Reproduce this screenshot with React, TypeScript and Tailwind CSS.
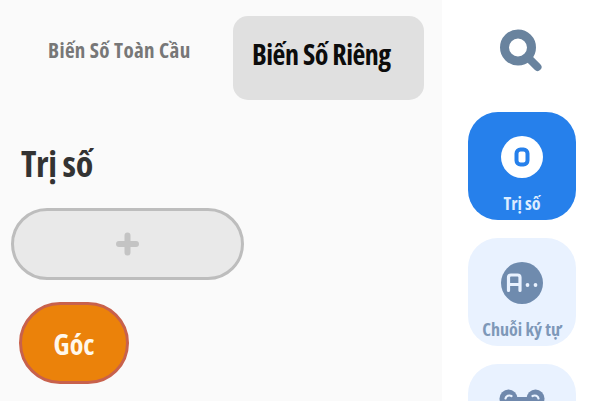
import type { ReactNode } from "react";

const CategoryButton = ({
  label,
  active = false,
  children,
}: {
  label: string;
  active?: boolean;
  children: ReactNode;
}) => (
  <button
    className={`flex h-[108px] w-[108px] shrink-0 flex-col items-center rounded-[30px] pt-6 ${
      active ? "bg-[#2680eb] text-[#dcecff]" : "bg-[#e9f2ff] text-[#7e98b8]"
    }`}
  >
    {children}
    <span className="mt-[13px] whitespace-nowrap text-[18px] leading-6 font-bold">
      {label}
    </span>
  </button>
);

const App = () => {
  return (
    <div className="flex h-[401px] w-[591px] overflow-hidden bg-white font-['Open_Sans','Noto_Sans',sans-serif] [font-stretch:75%]">
      {/* Variables panel */}
      <main className="w-[442px] shrink-0 bg-[#fafafa]">
        <div className="flex pt-4">
          <button className="h-[84px] w-[233px] pl-[48px] pb-[16px] text-left text-[21px] leading-7 font-bold tracking-[0.35px] whitespace-nowrap text-[#777]">
            Biến Số Toàn Cầu
          </button>
          <button className="h-[84px] w-[191px] rounded-[15px] bg-[#e0e0e0] pl-[19px] pb-[9px] text-left text-[28px] leading-8 font-bold tracking-[-0.5px] whitespace-nowrap text-[#0c0c0c]">
            Biến Số Riêng
          </button>
        </div>

        <h2 className="mt-[40px] ml-[21px] text-[36px] leading-[48px] font-bold tracking-[-0.4px] text-[#333]">
          Trị số
        </h2>

        <button className="mt-5 ml-[11px] flex h-[72px] w-[233px] items-center justify-center rounded-full border-[3px] border-[#bdbdbd] bg-[#e9e9e9]">
          <svg className="h-6 w-6" viewBox="0 0 24 24" fill="none" stroke="#c4c4c4" strokeWidth="6" strokeLinecap="round">
            <path d="M11.5 3.5v17M3 12h17" />
          </svg>
        </button>

        <button className="mt-[22px] ml-[19px] flex h-[82px] w-[110px] items-center justify-center rounded-full border-[3px] border-[#c8614c] bg-[#eb820a] pt-[2px] text-[28px] leading-9 font-bold text-[#fff8ec]">
          Góc
        </button>
      </main>

      {/* Category rail */}
      <aside className="flex flex-1 flex-col items-center gap-[18px] pr-[11px] pl-[22px]">
        <div className="flex h-[94px] shrink-0 items-center justify-center pt-[7px]">
          <svg className="h-[44px] w-[44px]" viewBox="0 0 44 44" fill="none" stroke="#69839e">
            <circle cx="18" cy="18.5" r="13.5" strokeWidth="9" />
            <path d="M28 28.5l9.5 9.5" strokeWidth="8" strokeLinecap="round" />
          </svg>
        </div>

        <CategoryButton label="Trị số" active>
          <svg className="h-[42px] w-[42px] shrink-0" viewBox="0 0 42 42">
            <circle cx="21" cy="21" r="21" fill="#fff" />
            <rect x="15.5" y="13.5" width="11" height="15" rx="4" fill="none" stroke="#2680eb" strokeWidth="4" />
          </svg>
        </CategoryButton>

        <CategoryButton label="Chuỗi ký tự">
          <svg className="h-[42px] w-[42px] shrink-0" viewBox="0 0 42 42">
            <circle cx="21" cy="21" r="21" fill="#6f8bae" />
            <path
              d="M7.5 28.5V15.5q0-2.5 2.5-2.5h6.5q2.5 0 2.5 2.5v13M7.5 22.5h11.500"
              fill="none"
              stroke="#e9f2ff"
              strokeWidth="3.2"
              strokeLinecap="round"
            />
            <circle cx="26.5" cy="23" r="1.9" fill="#e9f2ff" />
            <circle cx="34.5" cy="23" r="1.9" fill="#e9f2ff" />
          </svg>
        </CategoryButton>

        <CategoryButton label="">
          <svg className="h-[42px] w-[46px] shrink-0" viewBox="0 0 46 42" fill="#7089ad">
            <circle cx="9.5" cy="10.5" r="9" />
            <circle cx="36.5" cy="10.5" r="9" />
            <rect x="3" y="9" width="40" height="28" rx="12" />
            <path
              d="M6.5 10.5a4 3.500 0 0 1 6-2.500M39.500 10.5a4 3.500 0 0 0-6-2.500"
              fill="none"
              stroke="#e9f2ff"
              strokeWidth="2.2"
              strokeLinecap="round"
            />
          </svg>
        </CategoryButton>
      </aside>
    </div>
  );
};

export default App;
